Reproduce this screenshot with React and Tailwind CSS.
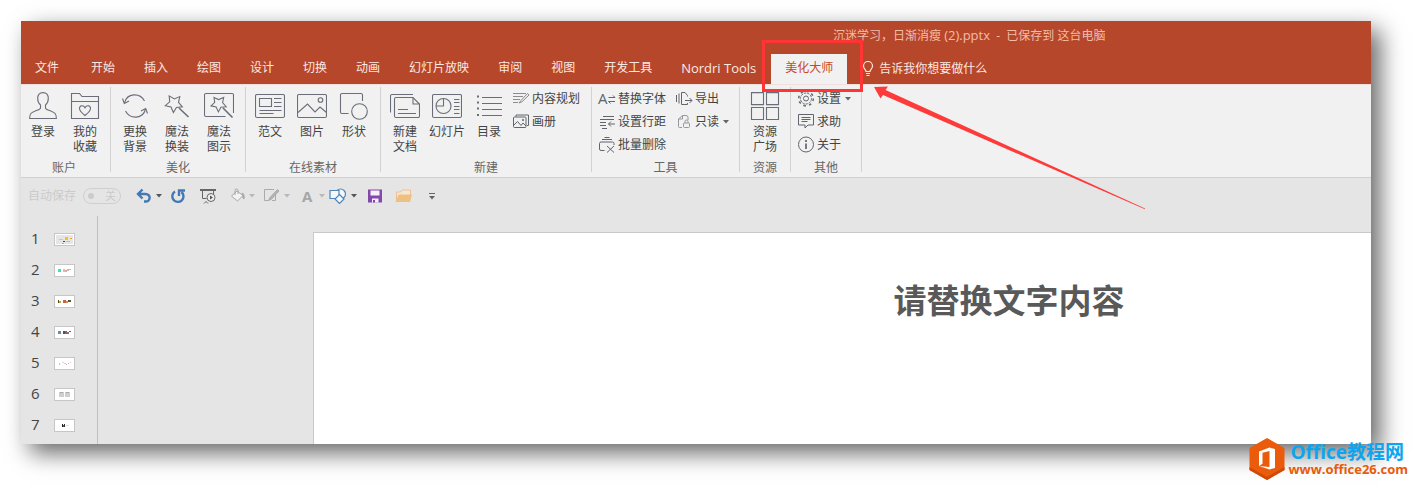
const tabs = [
  '文件', '开始', '插入', '绘图', '设计', '切换', '动画',
  '幻灯片放映', '审阅', '视图', '开发工具', 'Nordri Tools',
];

const star = 'M7.2 3.9 12.3 6.9 17.8 4.6 16.5 10.4 20.3 14.9 14.4 15.4 11.4 20.5 9 15 3.3 13.7 7.7 9.8Z';

// 30x28 drawings for the large ribbon buttons
const bigIcons = {
  user: (
    <path d="M15 .6c-3.600 0-5.300 2.500-5.300 6 0 3 1.200 5.200 2.800 6.400v3.200c-1 1.700-3.200 2-5.700 3-3.500 1.300-5.200 2.400-5.200 7.300h26.800c0-4.900-1.700-6-5.200-7.300-2.500-1-4.700-1.300-5.700-3v-3.200c1.600-1.200 2.800-3.400 2.800-6.400 0-3.500-1.700-6-5.300-6z" />
  ),
  favorites: (
    <>
      <path d="M1.500 26.500v-25h8l2.500 3h16.500v22zM1.500 9.500h27" />
      <path d="M15 23.500c-3-2.500-5.500-4.500-5.500-7 0-3.200 4-3.700 5.500-.8 1.500-2.900 5.500-2.400 5.500.8 0 2.500-2.500 4.500-5.500 7z" />
    </>
  ),
  refresh: (
    <>
      <path d="M4.500 11C7 .5 20 .5 24.500 9M25.500 17C23 27.500 10 27.500 5.500 19" />
      <path d="M2.500 6.500 4.300 11.500 9 9M27.500 21.500 25.700 16.500 21 19" />
    </>
  ),
  wand: (
    <>
      <path d={star} />
      <path d="M17 16l9.500 9" strokeWidth="1.600" />
    </>
  ),
  wandFrame: (
    <>
      <path d="M21.500 24.500H2a1.500 1.500 0 0 1-1.500-1.500V3A1.500 1.500 0 0 1 2 1.500h26A1.500 1.500 0 0 1 29.500 3v18" />
      <path d="M10 5.500 14.600 7.600 19.700 5.500 18.600 10.500 22.200 14.700 16.900 15.300 14.400 19.900 12.100 15 7 13.900 10.700 10.400Z" />
      <path d="M19 16l9.500 9.500" strokeWidth="1.600" />
    </>
  ),
  article: (
    <>
      <rect x=".5" y="2.500" width="29" height="23" rx="1.500" />
      <path d="M4.500 6.500h12v8h-12zM19 6.500h7.500M19 10.500h7.500M19 14.500h7.500M4.500 18.500h22M4.500 21.500h14" />
    </>
  ),
  picture: (
    <>
      <rect x=".5" y="2.500" width="29" height="23" rx="1.500" />
      <path d="M1 20.500 10.500 12l7.500 8 5-5 6.500 5.500" />
      <circle cx="23.500" cy="8" r="2.300" />
    </>
  ),
  shapes: (
    <>
      <path d="M9.500 21.500H3A1.500 1.500 0 0 1 1.500 20V3A1.500 1.500 0 0 1 3 1.500h19A1.500 1.500 0 0 1 23.500 3v6" />
      <circle cx="20.500" cy="19.500" r="7.800" />
    </>
  ),
  newDoc: (
    <>
      <path d="M.5 20.500V4A1.500 1.500 0 0 1 2 2.500h21" />
      <path d="M23 5.500H6A1.500 1.500 0 0 0 4.500 7v17A1.500 1.500 0 0 0 6 25.500h22a1.500 1.500 0 0 0 1.500-1.500V12zM23 5.500V12h6.500M8 17.500h10M8 21.500h18" />
    </>
  ),
  slide: (
    <>
      <rect x=".5" y="2.500" width="29" height="23" rx="1.500" />
      <circle cx="11.500" cy="14" r="7.500" />
      <path d="M11.500 6.500V14H4M22 7.500h5.500M22 10.500h5.500M22 14.500h5.500M22 17.500h5.500M22 21.500h5.500" />
    </>
  ),
  list: (
    <>
      <path d="M8 5.500h20M8 11.500h20M8 17.500h20M8 23.500h20" />
      <path d="M3 4.500h2M3 10.500h2M3 16.500h2M3 23h2" strokeWidth="2" />
    </>
  ),
  grid: <path d="M1.500 .6h12v12h-12zM16.500 .6h12v12h-12zM1.500 15.500h12v12h-12zM16.500 15.500h12v12h-12z" />,
};

// 16x16 drawings for the small ribbon buttons
const smallIcons = {
  outline: <path d="M0 2.500h13M0 5.500h10M0 8.500h7M0 11.500h5M14.500 2.500l-6.500 7-2 2.500 3-1.200L16 4z" stroke="#8c8c90" />,
  album: (
    <>
      <path d="M3 2.500V1h12.500v10.500H14" />
      <rect x=".5" y="3" width="12.500" height="10.500" rx="1" />
      <path d="M1 11 4.500 7.500l3.500 4 2-2.500 3 3" />
      <circle cx="10" cy="6" r=".7" />
    </>
  ),
  replaceFont: (
    <>
      <text x="-1" y="13" fontSize="15" fill="#62656d" stroke="none" fontFamily="Open Sans, sans-serif">A</text>
      <path d="M9.500 6.500H16l-2-2M16 10.500H9.500l2 2" />
    </>
  ),
  lineSpacing: <path d="M4 2.500h11M1 5.500h14M1 8.500h6M1 11.500h6M3 14.500h5M9.500 10h6.500M12 7.500 9.500 10l2.500 2.500" />,
  batchDelete: <path d="M5.500 .5h5M3 2.500h10M5.500 13.500H2A1.500 1.500 0 0 1 .5 12V6.500A1.500 1.500 0 0 1 2 5h11.500A1.500 1.500 0 0 1 15 6.500V8M8 9l7 6.500M15 9l-7 6.500" />,
  exportOut: <path d="M.5 4v7M3 2.500v10M11.500 5.500V4.500L9 1.500H5.500v12h6V12M9 9.500h7M13.500 7l2.500 2.500-2.500 2.500" />,
  readOnly: (
    <g stroke="#96979c">
      <path d="M6 13.500H3.500A1 1 0 0 1 2.500 12.500V5L6.500 1.500H10a2 2 0 0 1 2 2V6M6.500 1.500V5h-4" />
      <rect x="7.500" y="9" width="6" height="4.500" rx="1" />
      <path d="M9 9V7.500a1.500 1.500 0 0 1 3 0V9" />
    </g>
  ),
  gear: (
    <>
      <circle cx="8" cy="7.500" r="2.500" />
      <circle cx="8" cy="7.500" r="5.500" strokeDasharray="2.300 1" />
      <circle cx="8" cy="7.500" r="7.300" strokeDasharray="2.600 3.130" strokeWidth="1.500" />
    </>
  ),
  help: <path d="M.5 .5h15v10.500H10L7 14v-3H.5zM3.500 3.500h9M3.500 5.500h9M3.500 7.500h6" />,
  info: (
    <>
      <circle cx="8" cy="7.500" r="7.500" />
      <path d="M8 6.500V12M8 3v2" strokeWidth="1.700" />
    </>
  ),
};

const groups = [
  { title: '账户', width: 'w-[90px]', big: [['user', '登录'], ['favorites', '我的', '收藏']], cols: [] },
  { title: '美化', width: 'w-[135px]', big: [['refresh', '更换', '背景'], ['wand', '魔法', '换装'], ['wandFrame', '魔法', '图示']], cols: [] },
  { title: '在线素材', width: 'w-[135px]', big: [['article', '范文'], ['picture', '图片'], ['shapes', '形状']], cols: [] },
  {
    title: '新建',
    width: 'w-[211px]',
    big: [['newDoc', '新建', '文档'], ['slide', '幻灯片'], ['list', '目录']],
    cols: [[['outline', '内容规划'], ['album', '画册']]],
  },
  {
    title: '工具',
    width: 'w-[148px]',
    big: [],
    cols: [
      [['replaceFont', '替换字体'], ['lineSpacing', '设置行距'], ['batchDelete', '批量删除']],
      [['exportOut', '导出'], ['readOnly', '只读', true]],
    ],
  },
  { title: '资源', width: 'w-[51px]', big: [['grid', '资源', '广场']], cols: [] },
  { title: '其他', width: 'w-[71px]', big: [], cols: [[['gear', '设置', true], ['help', '求助'], ['info', '关于']]] },
];

// colored marks inside each slide thumbnail: x, y, width, height, color
const thumbs = [
  [[0, 0, 17, 9, '#e6e6e6'], [3, 4, 4, 1, '#f2b9a0'], [9, 2, 3, 3, '#f5c21b'], [7, 6, 2, 1, '#444'], [10, 6, 4, 1, '#f5c21b'], [14, 3, 2, 1, '#e9a13a'], [6, 8, 2, 1, '#f39c4a']],
  [[2, 3, 3, 3, '#4fd8b4'], [7, 3, 2, 3, '#f0b4ae'], [9, 4, 2, 2, '#e9a5a0'], [11, 3, 2, 2, '#b8bcc4'], [13, 3, 2, 1, '#7fd8c0']],
  [[2, 3, 1, 3, '#5a4a20'], [3, 4, 2, 2, '#c9a63a'], [7, 3, 3, 3, '#d0604e'], [10, 4, 2, 2, '#e08a50'], [12, 3, 3, 2, '#5a5a1e']],
  [[2, 3, 3, 3, '#6d8cab'], [7, 3, 2, 3, '#3f5872'], [9, 3, 2, 3, '#c64a52'], [11, 4, 2, 2, '#7d6f90'], [13, 3, 2, 1, '#4b657e']],
  [[3, 4, 1, 2, '#c4c4c4'], [6, 3, 2, 1, '#dadada'], [8, 4, 2, 1, '#cfcfcf'], [10, 5, 1, 1, '#e6a6a6'], [12, 4, 1, 1, '#bcbcbc'], [14, 3, 1, 1, '#d0d0d0']],
  [[3, 2, 5, 5, '#cfcfcf'], [9, 2, 5, 5, '#cfcfcf'], [4, 2, 3, 1, '#aaa'], [10, 2, 3, 1, '#aaa']],
  [[6, 3, 1, 3, '#222'], [7, 4, 1, 2, '#555'], [8, 3, 1, 3, '#333'], [10, 4, 3, 1, '#ddd']],
];

function Caret({ className = 'text-[#555]' }) {
  return (
    <svg viewBox="0 0 6 4" className={`h-1 w-1.5 shrink-0 ${className}`} fill="currentColor">
      <path d="M0 0h6L3 3.500z" />
    </svg>
  );
}

function BigButton({ icon, lines }) {
  return (
    <button className="flex w-[42px] flex-col items-center pt-[5px] leading-[15px]">
      <svg viewBox="0 0 30 28" className="mb-[4px] h-7 w-[30px]" fill="none" stroke="#6b6e78" strokeWidth="1.100">
        {bigIcons[icon]}
      </svg>
      {lines.map((line) => (
        <span key={line}>{line}</span>
      ))}
    </button>
  );
}

function SmallButton({ icon, label, caret }) {
  return (
    <button className="flex h-[23px] items-center">
      <svg viewBox="0 0 16 16" className="mr-[3px] h-4 w-4 overflow-visible" fill="none" stroke="#62656d">
        {smallIcons[icon]}
      </svg>
      <span>{label}</span>
      {caret && <Caret className="ml-1 text-[#666]" />}
    </button>
  );
}

function RibbonGroup({ group }) {
  const first = group.title === '账户';
  const narrow = group.title === '资源';
  return (
    <section aria-label={group.title} className={`${group.width} flex shrink-0 flex-col border-r border-[#d2d2d2]`}>
      <div className={`flex flex-1 ${first ? 'pl-px' : narrow ? 'pl-1' : 'pl-[3px]'}`}>
        {group.big.map(([icon, ...lines]) => (
          <BigButton key={icon} icon={icon} lines={lines} />
        ))}
        <div className={`flex gap-[10px] ${group.big.length ? 'pl-[3px]' : 'pl-1'}`}>
          {group.cols.map((col, i) => (
            <div key={i} className="flex flex-col">
              {col.map(([icon, label, caret]) => (
                <SmallButton key={icon} icon={icon} label={label} caret={caret} />
              ))}
            </div>
          ))}
        </div>
      </div>
      <div className={`h-[13px] text-center leading-[18px] text-[#666] ${first ? 'pr-[3px]' : ''}`}>{group.title}</div>
    </section>
  );
}

function QuickAccess() {
  return (
    <div className="flex h-[38px] shrink-0 items-center pb-[2px] pl-[7px]">
      <span className="text-[#cbcbcb]">自动保存</span>
      <button className="ml-[7px] flex h-4 w-[38px] items-center justify-between rounded-full border border-[#cfcfcf] px-1 text-[11px] text-[#cbcbcb]">
        <span className="h-1.5 w-1.5 rounded-full bg-[#cbcbcb]" />
        关
      </button>
      <button aria-label="撤消" className="ml-[15px] flex items-center gap-1">
        <svg viewBox="0 0 16 16" className="h-4 w-4" fill="none" stroke="#4179b5" strokeWidth="2.400">
          <path d="M6.500 1.500 2 6l4.500 4.500M2 6h7.500c5.500 0 5.500 7.500 0 7.500H8" />
        </svg>
        <Caret />
      </button>
      <button aria-label="重复" className="ml-2">
        <svg viewBox="0 0 16 16" className="h-4 w-4" fill="none" stroke="#4179b5" strokeWidth="2.400">
          <path d="M5 3.500A5.600 5.600 0 1 0 11.500 4" />
          <path d="M9 8V2.500h6" />
        </svg>
      </button>
      <button aria-label="从头开始放映" className="ml-[14px]">
        <svg viewBox="0 0 16 16" className="h-4 w-4" fill="none" stroke="#666">
          <path d="M0 2h16" strokeWidth="2" />
          <path d="M2.500 3v7.500h4M13.500 3v3M6 13.500l-2 2M6 13.500l2 2" />
          <circle cx="11" cy="9.500" r="4" fill="#eee" />
          <path d="M10 7.500v4l3-2z" fill="#555" stroke="none" />
        </svg>
      </button>
      <button aria-label="形状填充" className="ml-[14px] flex items-center gap-[3px]">
        <svg viewBox="0 0 16 16" className="h-4 w-4" fill="#f3f3f3" stroke="#a8a8a8">
          <path d="M7 3l6 4.500L7.500 13 1.500 8z" />
          <path d="M5 7V2.500a1.500 1.500 0 0 1 3 0V6" fill="none" />
          <path d="M12 5c2 .5 2.500 3 2 6-1-.5-1.500-2-1-3.500z" fill="#a8a8a8" />
        </svg>
        <Caret className="text-[#b8b8b8]" />
      </button>
      <button aria-label="形状轮廓" className="ml-2 flex items-center gap-[5px]">
        <svg viewBox="0 0 16 16" className="h-4 w-4" fill="none" stroke="#ababab">
          <path d="M11 1.500H1.500v11h4M12.500 7v5.500H9" />
          <path d="M14.500 1.500 7 9.500l-1.500 3 3-1.300L16 3z" fill="#b4b4b4" />
        </svg>
        <Caret className="text-[#b8b8b8]" />
      </button>
      <button aria-label="字体颜色" className="ml-3 flex items-center gap-[7px] text-[15px] font-bold text-[#a6a6a6]">
        A
        <Caret className="text-[#b8b8b8]" />
      </button>
      <button aria-label="形状" className="ml-1 flex items-center gap-1">
        <svg viewBox="0 0 18 16" className="h-4 w-[18px]" fill="#f4f8fb" stroke="#4e86b8" strokeWidth="1.200">
          <circle cx="11.500" cy="6" r="5" />
          <path d="M1 2.500h9v8H1z" />
          <path d="M10.500 6.500l4.500 4.500-4.500 4.500L6 11z" />
        </svg>
        <Caret />
      </button>
      <button aria-label="保存" className="ml-[10px]">
        <svg viewBox="0 0 16 16" className="h-4 w-4" fill="none">
          <path d="M1 1.500h14v13H1z" fill="#8348ab" />
          <path d="M3.500 2.500h9v5h-9zM5 10.500h6.500v4H5z" fill="#f5f0f8" />
          <path d="M6 12h2v2.500H6z" fill="#8348ab" />
        </svg>
      </button>
      <button aria-label="打开" className="ml-3">
        <svg viewBox="0 0 17 16" className="h-4 w-[17px]" fill="#edc180">
          <path d="M1.500 13V4h4L7 2h8.500v5" fill="#f6e6d4" stroke="#efbd9b" />
          <path d="M3.500 6.500H17l-2 7.500H.5z" />
        </svg>
      </button>
      <button aria-label="自定义快速访问工具栏" className="ml-[17px]">
        <svg viewBox="0 0 6 7" className="h-[7px] w-1.5" fill="#666">
          <path d="M0 0h6v1H0zM0 3h6L3 6.500z" />
        </svg>
      </button>
    </div>
  );
}

function Thumbnail({ marks }) {
  return (
    <svg viewBox="-2 -2 21 13" className="h-[13px] w-[21px]" shapeRendering="crispEdges">
      <path d="M-2-2h21v13H-2z" fill="#c6c6c6" />
      <path d="M-1-1h19v11H-1z" fill="#fff" />
      {marks.map(([x, y, w, h, color], i) => (
        <rect key={i} x={x} y={y} width={w} height={h} fill={color} />
      ))}
    </svg>
  );
}

function Watermark() {
  return (
    <div className="absolute right-[5px] bottom-[5px] flex items-center gap-[3px] font-bold">
      <svg viewBox="0 0 36 44" className="h-11 w-9">
        <path d="M18 1 35.500 11v22L18 43 .5 33V11z" fill="#ea5b0c" />
        <path d="M.5 33 18 43l17.500-10v-3L18 40 .5 30z" fill="#cf4a06" />
        <path d="M10 14.500 20.500 10.500 26 12v19l-5.500 1.500L10 29l10.500 1V14l-7 1.800v11L10 29z" fill="#fff" />
      </svg>
      <div className="flex flex-col">
        <span className="pl-[2px] text-[19px] leading-[20px] text-[#0ea5ee]">Office教程网</span>
        <a href="#" className="text-[13px] leading-[14px] text-[#e85a0c]">www.office26.com</a>
      </div>
    </div>
  );
}

export default function App() {
  return (
    <div className="relative overflow-hidden bg-white pt-[21px] pr-[42px] pb-[42px] pl-[21px] font-['Open_Sans','Noto_Sans_CJK_SC',sans-serif] text-[12px] leading-[16px] text-[#444]">
      <div className="flex flex-col bg-[#e5e5e5] shadow-[9px_9px_22px_rgba(0,0,0,0.6)]">
        <header className="bg-[#b7472a] text-[#fbe9e3]">
          <div className="h-[33px] overflow-hidden pt-[6px] pl-[812px] whitespace-nowrap text-[#f3bda8]">
            沉迷学习，日渐消瘦 <span className="text-[13px]">(2).pptx</span>&nbsp; -&nbsp; 已保存到 这台电脑
          </div>
          <nav className="flex h-[30px] items-center gap-px whitespace-nowrap">
            {tabs.map((tab) => (
              <button
                key={tab}
                className={`h-full px-3.5 pb-[3px] first:mr-[3px] ${tab === 'Nordri Tools' ? 'text-[13px]' : ''}`}
              >
                {tab}
              </button>
            ))}
            <div className="relative h-full">
              <button className="h-full bg-[#f1f1f1] px-3.5 pb-[3px] text-[#c8492a]">美化大师</button>
              <div className="pointer-events-none absolute -top-[14px] -left-[9px] z-10 h-[52px] w-[101px] border-[3px] border-[#ff3434]" />
              <svg viewBox="0 0 272 124" className="pointer-events-none absolute top-[32px] left-[103px] z-10 h-[124px] w-[272px]" fill="#ff3a3a">
                <path d="M0 1 14 .5 11.500 4 271 122.500v.8L9 9l-2.500 3.500z" />
              </svg>
            </div>
            <button className="flex h-full items-center gap-[5px] pb-px pl-3.5">
              <svg viewBox="0 0 12 16" className="h-4 w-3" fill="none" stroke="#fbe9e3" strokeWidth="1.200">
                <path d="M4 10.500C4 8.500 1.500 8 1.500 5a4.500 4.500 0 0 1 9 0c0 3-2.500 3.500-2.500 5.500zM4 12.500h4M4.500 14.500h3" />
              </svg>
              告诉我你想要做什么
            </button>
          </nav>
        </header>

        <div className="flex h-[94px] shrink-0 overflow-hidden border-t border-b border-t-[#f0dfdc] border-b-[#d0d0d0] bg-[#f1f1f1] pt-[2px] pb-[5px]">
          {groups.map((group) => (
            <RibbonGroup key={group.title} group={group} />
          ))}
        </div>

        <QuickAccess />

        <main className="flex overflow-hidden">
          <ol className="flex w-[77px] shrink-0 flex-col gap-[11px] border-r border-[#c0c0c0] pt-[13px] pb-[9px] pl-[10px]">
            {thumbs.map((marks, i) => (
              <li key={i} className="flex h-5 items-center gap-[13px]">
                <span className="w-[10px] pb-[3px] text-[15px]">{i + 1}</span>
                <Thumbnail marks={marks} />
              </li>
            ))}
          </ol>
          <section className="mt-4 -mr-[333px] ml-[215px] flex grow justify-center border-t border-l border-[#c9c9c9] bg-white pt-[44px]">
            <h1 className="text-[33px] leading-[48px] font-bold text-[#595959]">请替换文字内容</h1>
          </section>
        </main>
      </div>
      <Watermark />
    </div>
  );
}
